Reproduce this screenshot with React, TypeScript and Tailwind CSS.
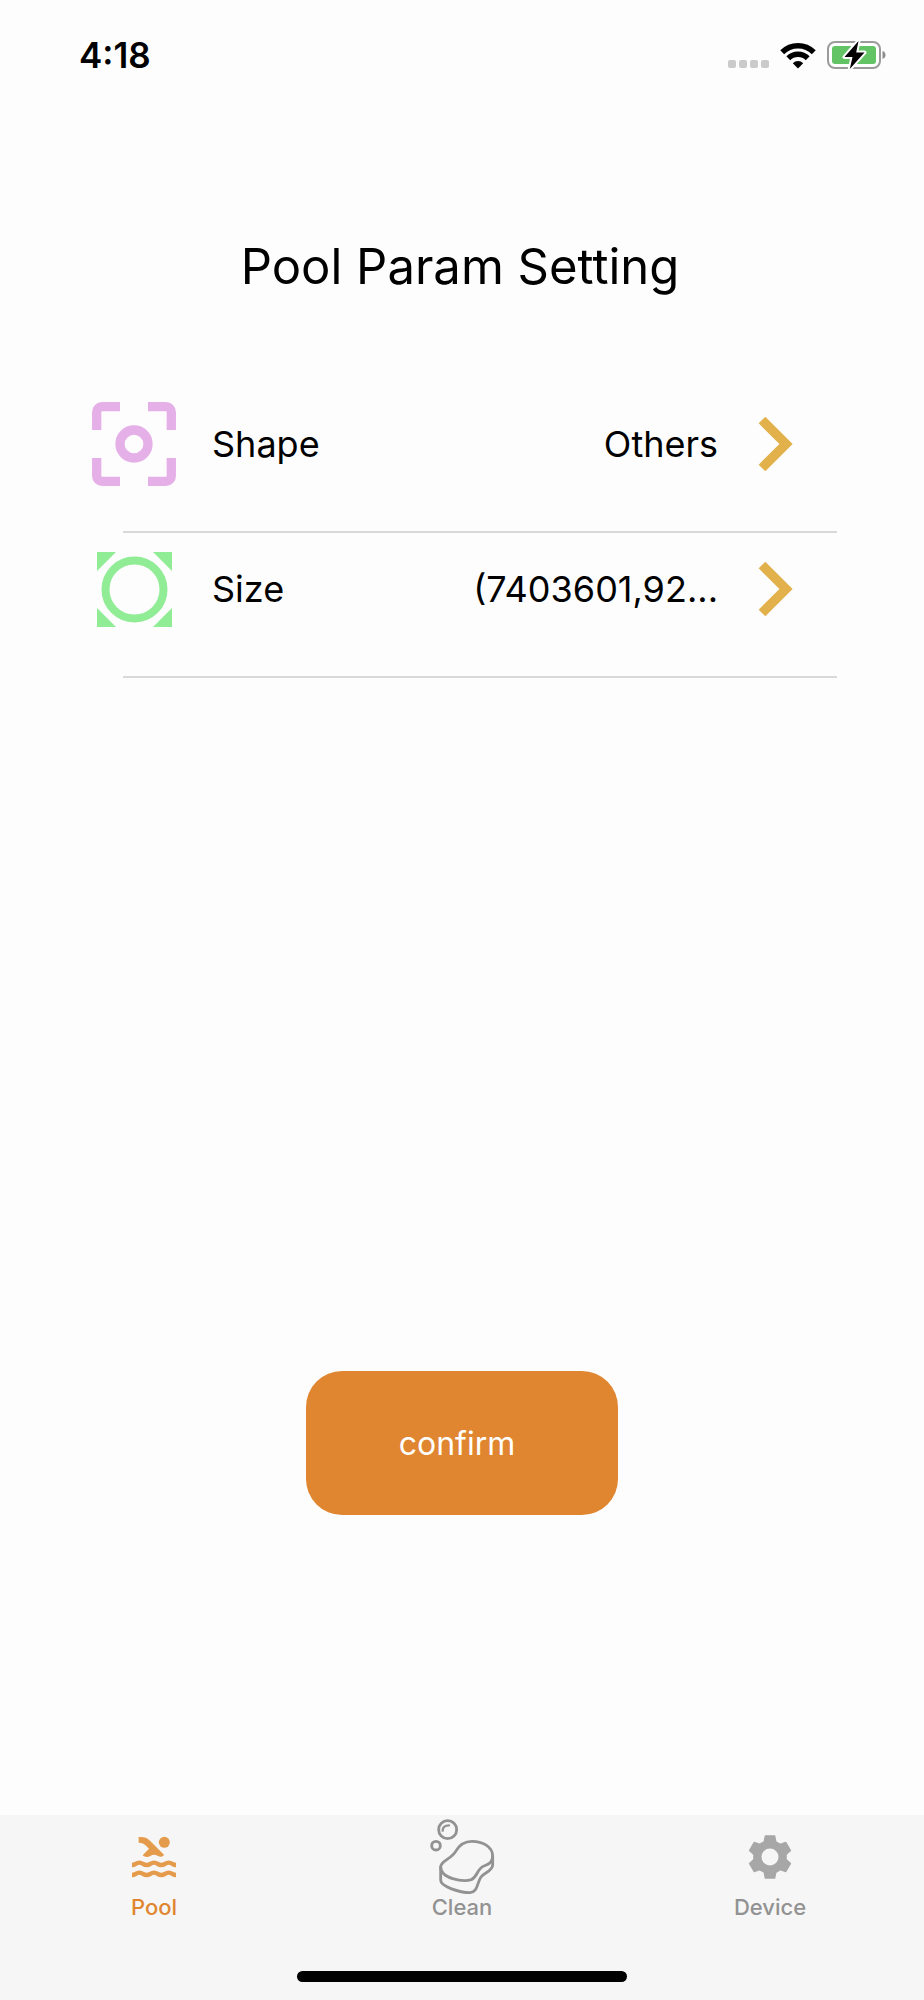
import type { ReactNode } from "react";

function SignalDots() {
  return (
    <div className="flex gap-[3px] pt-[18px]" aria-label="No signal">
      {[0, 1, 2, 3].map((i) => (
        <span key={i} className="size-2 rounded-[2px] bg-[#cacaca]" />
      ))}
    </div>
  );
}

function WifiIcon() {
  return (
    <svg className="h-[27px] w-[36px]" viewBox="0 0 36 27" fill="none" stroke="#000" strokeWidth="5.500" aria-hidden="true">
      <path d="M2.2 10.2A22.4 22.4 0 0 1 33.8 10.2" />
      <path d="M8.3 16.3A13.7 13.7 0 0 1 27.7 16.3" />
      <path d="M18 26.5 L12.8 21.2 A7.4 7.4 0 0 1 23.2 21.2 Z" fill="#000" stroke="none" />
    </svg>
  );
}

function BatteryIcon() {
  return (
    <svg className="h-[30px] w-[60px]" viewBox="0 0 60 30" aria-hidden="true">
      <rect x="1" y="2" width="52" height="26" rx="7" fill="#fff" stroke="#9b9b9b" strokeWidth="2" />
      <rect x="5" y="6" width="44" height="18" rx="3" fill="#63c466" />
      <path d="M55.500 11v8c2-.6 3-2.200 3-4s-1-3.400-3-4z" fill="#8c8c8c" />
      <path d="M31.500 1 L17.500 17 H25.500 L22.800 29 L37.500 12.500 H29.200 Z" fill="#000" stroke="#fff" strokeWidth="4" strokeLinejoin="round" paintOrder="stroke" />
    </svg>
  );
}

function ShapeIcon() {
  return (
    <svg className="size-[84px]" viewBox="0 0 84 84" fill="none" stroke="#e5afe8" strokeWidth="9.300" aria-hidden="true">
      <path d="M4.700 28V10a5.300 5.300 0 0 1 5.300-5.300H28M56 4.700H74a5.300 5.300 0 0 1 5.300 5.300V28M79.300 56V74a5.300 5.300 0 0 1-5.300 5.300H56M28 79.300H10a5.300 5.300 0 0 1-5.300-5.300V56" />
      <circle cx="42" cy="42" r="14" />
    </svg>
  );
}

function SizeIcon() {
  return (
    <svg className="size-[76px]" viewBox="-1 -1 76 76" fill="#90ec95" aria-hidden="true">
      <path d="M0 0H19L0 19ZM56 0H75V19ZM0 56L19 75H0ZM75 56V75H56Z" />
      <circle cx="37.500" cy="37.500" r="29" fill="none" stroke="#90ec95" strokeWidth="8" />
    </svg>
  );
}

function Chevron() {
  return (
    <svg className="h-14 w-9 shrink-0" viewBox="0 0 36 56" fill="none" stroke="#e2b14c" strokeWidth="9.400" aria-hidden="true">
      <path d="M4 4L28 28L4 52" />
    </svg>
  );
}

function SwimmerIcon() {
  return (
    <svg className="h-[54px] w-[56px]" viewBox="0 0 168 162" fill="#e59b4c" aria-hidden="true">
      <circle cx="115" cy="37" r="16.500" />
      <path d="M38 21C54 20 63 23 72 32L114 74C110 82 102 81 96 78C88 73 80 73 73 78C66 82 57 82 50 76L69 56L63 50C56 42 49 38 38 38Z" />
      <g fill="none" stroke="#e59b4c" strokeWidth="13">
        <path d="M18 105C29 105 29 98 40 98S51 105 62 105S73 98 84 98S95 105 106 105S117 98 128 98S139 105 150 105" />
        <path d="M18 135C29 135 29 128 40 128S51 135 62 135S73 128 84 128S95 135 106 135S117 128 128 128S139 135 150 135" />
      </g>
    </svg>
  );
}

function SpongeIcon() {
  return (
    <svg className="h-[77px] w-[65px]" viewBox="60 54 195 231" fill="none" stroke="#929292" strokeWidth="8.500" strokeLinecap="round" strokeLinejoin="round" aria-hidden="true">
      <circle cx="113" cy="86" r="27" />
      <path d="M98 89C98 79 105 73 117 73" strokeWidth="7" />
      <circle cx="78" cy="134" r="13" />
      <path d="M92 197C93 179 124 174 137 151C149 130 164 121 186 121C217 121 248 137 248 165C248 184 238 189 222 195C200 203 204 227 184 236C158 244 91 232 92 197Z" />
      <path d="M92 200V238C92 257 150 275 180 275C205 272 200 246 213 228C222 215 248 210 248 192V165" />
    </svg>
  );
}

function GearIcon() {
  return (
    <svg className="size-[44px]" viewBox="-66 -66 132 132" fill="#a7a7a7" stroke="#a7a7a7" aria-hidden="true">
      <circle r="38" fill="none" strokeWidth="25" />
      {[0, 60, 120, 180, 240, 300].map((angle) => (
        <path key={angle} d="M-14-63H14L19-38H-19Z" strokeWidth="4" strokeLinejoin="round" transform={`rotate(${angle})`} />
      ))}
    </svg>
  );
}

function SettingRow({ icon, label, value }: { icon: ReactNode; label: string; value: string }) {
  return (
    <li>
      <button type="button" className="flex h-28 w-full items-center pr-[43px] text-left text-4xl">
        <span className="flex w-21 shrink-0 justify-center">{icon}</span>
        <span className="ml-9">{label}</span>
        <span className="mr-10 ml-auto">{value}</span>
        <Chevron />
      </button>
      <div className="mt-[31px] ml-[31px] h-0.5 bg-[#d9d9d9]" />
    </li>
  );
}

function Tab({ icon, label, active = false }: { icon: ReactNode; label: string; active?: boolean }) {
  return (
    <a
      href={`#${label.toLowerCase()}`}
      aria-current={active ? "page" : undefined}
      className={`flex flex-1 flex-col items-center text-[22px] leading-5 font-medium ${active ? "text-[#e08630]" : "text-[#929292]"}`}
    >
      <span className="flex h-20 items-center">{icon}</span>
      {label}
    </a>
  );
}

export default function App() {
  return (
    <div className="flex min-h-screen flex-col bg-[#fdfdfd] font-['Inter','Liberation_Sans',sans-serif] text-black">
      <header className="flex h-[110px] items-center justify-between pr-[37px] pl-[79px]">
        <time className="text-[35px] font-semibold">4:18</time>
        <div className="flex items-center gap-[11px]">
          <SignalDots />
          <WifiIcon />
          <BatteryIcon />
        </div>
      </header>

      <main className="flex flex-1 flex-col">
        <h1 className="mt-[123px] pr-1 text-center text-[49px] leading-[68px]">Pool Param Setting</h1>
        <ul className="mt-[87px] mr-[87px] ml-[92px]">
          <SettingRow icon={<ShapeIcon />} label="Shape" value="Others" />
          <SettingRow icon={<SizeIcon />} label="Size" value="(7403601,92..." />
        </ul>
        <button
          type="button"
          className="mx-auto mt-auto mb-[300px] h-36 w-[312px] rounded-[36px] bg-[#e08630] pt-0.5 pr-2.5 text-[32px] text-white"
        >
          confirm
        </button>
      </main>

      <footer className="bg-[#f6f6f6]">
        <nav className="flex h-[156px] pt-0.5">
          <Tab icon={<SwimmerIcon />} label="Pool" active />
          <Tab icon={<SpongeIcon />} label="Clean" />
          <Tab icon={<GearIcon />} label="Device" />
        </nav>
        <div className="mx-auto mb-[18px] h-[11px] w-[330px] rounded-full bg-black" />
      </footer>
    </div>
  );
}
